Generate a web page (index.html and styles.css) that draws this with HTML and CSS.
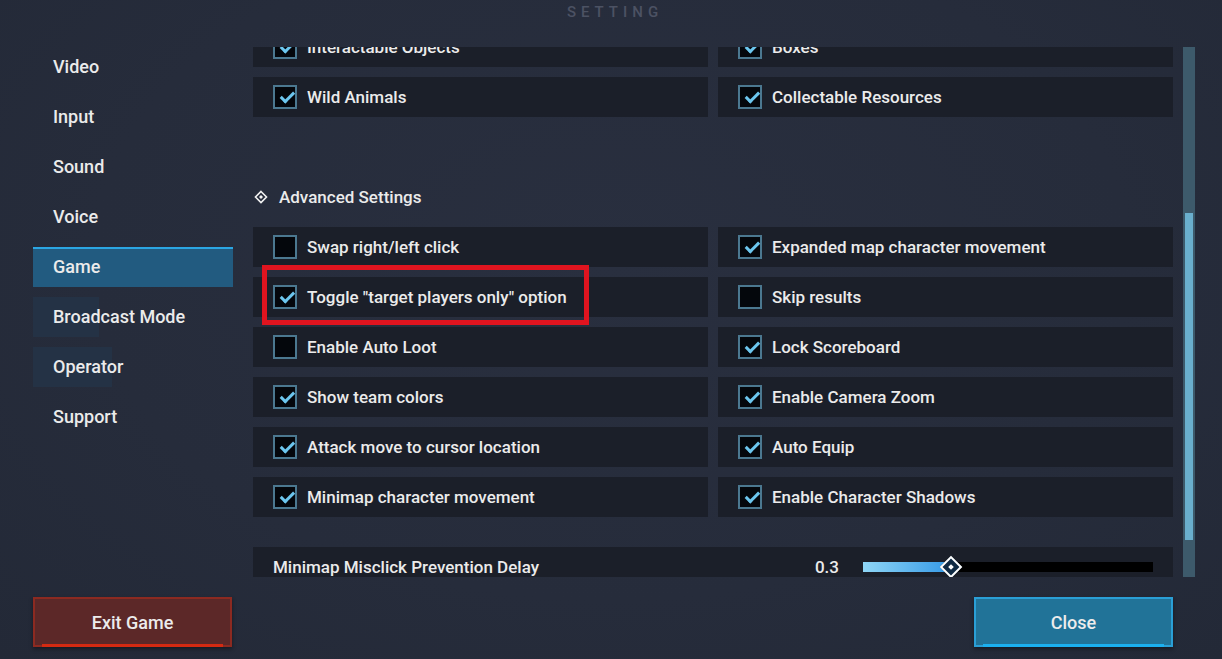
FILE: index.html
```html
<!DOCTYPE html>
<html>
<head>
    <title>Setting</title>
    <link rel="stylesheet" href="styles.css">
</head>
<body>
    <div class="page">
        <header class="title">SETTING</header>

        <div class="main">
            <nav class="nav">
                <div class="nav-item">Video</div>
                <div class="nav-item">Input</div>
                <div class="nav-item">Sound</div>
                <div class="nav-item">Voice</div>
                <div class="nav-item active">Game</div>
                <div class="nav-item trail trail-short">Broadcast Mode</div>
                <div class="nav-item trail trail-long">Operator</div>
                <div class="nav-item">Support</div>
            </nav>

            <div class="viewport">
                <div class="scroller">
                    <div class="grid">
                        <div class="row"><span class="box on"></span>Interactable Objects</div>
                        <div class="row"><span class="box on"></span>Boxes</div>
                        <div class="row"><span class="box on"></span>Wild Animals</div>
                        <div class="row"><span class="box on"></span>Collectable Resources</div>
                    </div>

                    <div class="section-head">
                        <svg class="diamond" width="14" height="14" viewBox="0 0 14 14">
                            <path d="M7 1.5 L12.5 7 L7 12.5 L1.5 7 Z" fill="none" stroke="#f2f2f2" stroke-width="1.6"/>
                            <rect x="5.6" y="5.6" width="2.8" height="2.8" fill="#f2f2f2" transform="rotate(45 7 7)"/>
                        </svg>
                        Advanced Settings
                    </div>

                    <div class="grid">
                        <div class="row"><span class="box"></span>Swap right/left click</div>
                        <div class="row"><span class="box on"></span>Expanded map character movement</div>
                        <div class="row marked"><span class="box on"></span>Toggle "target players only" option<span class="highlight"></span></div>
                        <div class="row"><span class="box"></span>Skip results</div>
                        <div class="row"><span class="box"></span>Enable Auto Loot</div>
                        <div class="row"><span class="box on"></span>Lock Scoreboard</div>
                        <div class="row"><span class="box on"></span>Show team colors</div>
                        <div class="row"><span class="box on"></span>Enable Camera Zoom</div>
                        <div class="row"><span class="box on"></span>Attack move to cursor location</div>
                        <div class="row"><span class="box on"></span>Auto Equip</div>
                        <div class="row"><span class="box on"></span>Minimap character movement</div>
                        <div class="row"><span class="box on"></span>Enable Character Shadows</div>
                    </div>

                    <div class="slider-row">
                        <span class="slider-label">Minimap Misclick Prevention Delay</span>
                        <span class="slider-value">0.3</span>
                        <div class="track">
                            <div class="fill" style="width: 30%"></div>
                            <span class="knob"></span>
                        </div>
                    </div>
                </div>
            </div>

            <div class="scrollbar">
                <div class="thumb"></div>
            </div>
        </div>

        <footer class="buttons">
            <button class="btn exit">Exit Game</button>
            <button class="btn close">Close</button>
        </footer>
    </div>
</body>
</html>
```

FILE: styles.css
```css
body {
    margin: 0;
    background: radial-gradient(ellipse at 50% 40%, #292f3f 0%, #262c3b 60%, #232937 100%);
    color: #ebebeb;
    font-family: Roboto, "Liberation Sans", sans-serif;
    font-size: 17px;
    font-weight: 500;
    height: 659px;
    overflow: hidden;
}

.page {
    display: flex;
    flex-direction: column;
    padding: 0 27px 0 33px;
}

.title {
    height: 47px;
    line-height: 25px;
    text-align: center;
    color: #4c5263;
    font-size: 15px;
    letter-spacing: 5px;
    padding-left: 2px;
}

.main {
    display: flex;
    height: 530px;
}

/* left menu */

.nav {
    width: 200px;
    margin-right: 20px;
    display: flex;
    flex-direction: column;
    gap: 10px;
}

.nav-item {
    height: 40px;
    line-height: 40px;
    padding-left: 20px;
    font-size: 18px;
    position: relative;
}

.nav-item.active {
    background: #225b80;
    box-shadow: inset 0 2px 0 #2ba6e3;
}

.nav-item.trail::before {
    content: "";
    position: absolute;
    left: 0;
    top: 0;
    bottom: 0;
    background: #243245;
    z-index: -1;
}

.trail-short::before {
    width: 66px;
}

.trail-long::before {
    width: 79px;
}

/* options */

.viewport {
    width: 920px;
    overflow: hidden;
}

.scroller {
    margin-top: -20px;
}

.grid {
    display: grid;
    grid-template-columns: 1fr 1fr;
    gap: 10px;
}

.row {
    height: 40px;
    background: #1b1f29;
    display: flex;
    align-items: center;
    padding-left: 20px;
    position: relative;
}

.box {
    width: 20px;
    height: 20px;
    border: 2px solid #4b7890;
    background: #04070c;
    margin-right: 10px;
    position: relative;
}

.box.on::after {
    content: "";
    position: absolute;
    left: 4px;
    top: 2px;
    width: 11px;
    height: 5px;
    border-left: 3px solid #6cc6ee;
    border-bottom: 3px solid #6cc6ee;
    transform: rotate(-45deg) translate(-1px, 3px);
}

.highlight {
    position: absolute;
    left: 9px;
    top: -12px;
    width: 317px;
    height: 50px;
    border: 5px solid #e0141f;
}

.section-head {
    margin-top: 60px;
    margin-bottom: 10px;
    height: 40px;
    display: flex;
    align-items: center;
    padding-left: 1px;
}

.diamond {
    margin-right: 11px;
}

.slider-row {
    margin-top: 30px;
    height: 40px;
    background: #1b1f29;
    display: flex;
    align-items: center;
    padding: 0 20px;
}

.slider-label {
    flex: 1;
}

.slider-value {
    margin-right: 24px;
}

.track {
    width: 290px;
    height: 10px;
    background: #000;
    position: relative;
}

.fill {
    height: 100%;
    background: linear-gradient(to right, #8fd6f6, #3599e6);
}

.knob {
    position: absolute;
    left: 80px;
    top: -3px;
    width: 12px;
    height: 12px;
    border: 2px solid #fff;
    background: #0f2a44;
    transform: rotate(45deg);
}

.knob::after {
    content: "";
    position: absolute;
    left: 4px;
    top: 4px;
    width: 4px;
    height: 4px;
    background: #fff;
}

/* scrollbar */

.scrollbar {
    width: 12px;
    margin-left: 10px;
    background: #3d5a6b;
    position: relative;
}

.thumb {
    position: absolute;
    left: 2px;
    right: 2px;
    top: 166px;
    height: 327px;
    background: #6aafcd;
}

/* footer */

.buttons {
    display: flex;
    justify-content: space-between;
    margin-top: 20px;
    margin-right: 22px;
}

.btn {
    width: 199px;
    height: 50px;
    font-family: inherit;
    font-size: 18px;
    font-weight: 500;
    color: #ececec;
    cursor: pointer;
    position: relative;
    box-shadow: 0 2px 4px rgba(0, 0, 0, 0.4);
}

.btn::after {
    content: "";
    position: absolute;
    left: 7px;
    right: 7px;
    bottom: -2px;
    height: 3px;
}

.exit {
    background: #5c2828;
    border: 2px solid #8c2a21;
}

.exit::after {
    background: #d42a12;
}

.close {
    background: #217398;
    border: 2px solid #2a9fd6;
}

.close::after {
    background: #1bb0ef;
}
```
